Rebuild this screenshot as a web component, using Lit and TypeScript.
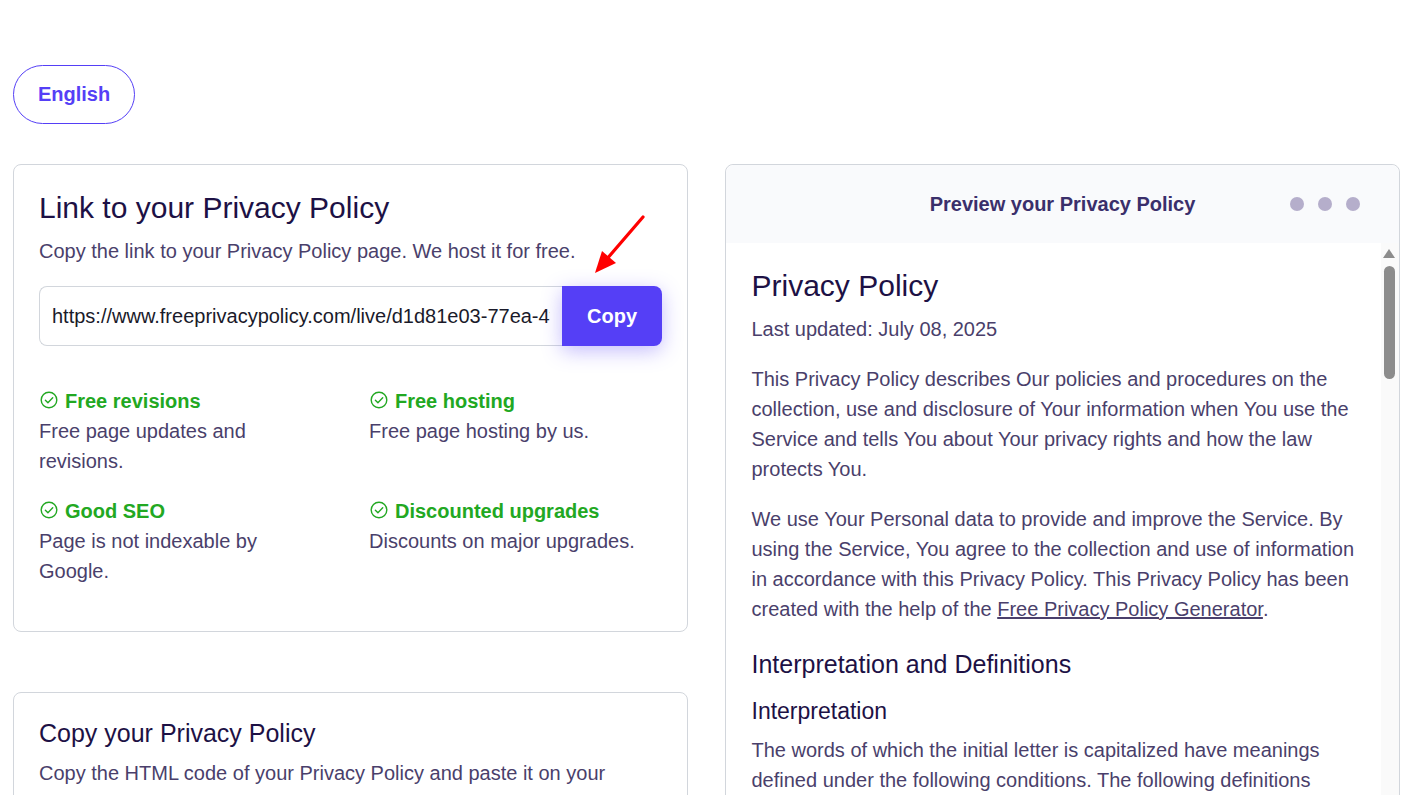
import { LitElement, html, css, svg } from "lit";
import { customElement } from "lit/decorators.js";

const check = html`<svg class="chk" viewBox="0 0 18 18" width="18" height="18" fill="none" stroke="#22a822" stroke-width="1.4" stroke-linecap="round" stroke-linejoin="round">
  <circle cx="9" cy="9" r="7.8"/><path d="M5.4 9.3l2.5 2.5 4.8-5"/></svg>`;

const features = [
  ["Free revisions", "Free page updates and revisions."],
  ["Free hosting", "Free page hosting by us."],
  ["Good SEO", "Page is not indexable by Google."],
  ["Discounted upgrades", "Discounts on major upgrades."],
];

@customElement("app-root")
export class AppRoot extends LitElement {
  static styles = css`
    :host { display: block; height: 795px; overflow: hidden; background: #fff; font-family: "Liberation Sans", Arial, sans-serif; color: #4a3f6b; font-size: 20px; line-height: 30px; }
    .page { padding: 65px 14px 0 13px; }
    .lang { display: inline-flex; align-items: center; justify-content: center; box-sizing: border-box; width: 122px; height: 59px; padding-bottom: 2px; border: 1px solid #553ff6; border-radius: 30px; color: #553ff6; font-weight: 700; margin-bottom: 40px; }
    .cols { display: grid; grid-template-columns: 675px 675px; column-gap: 37px; }
    .left { display: flex; flex-direction: column; gap: 60px; }
    .card { box-sizing: border-box; border: 1px solid #d2d6dc; border-radius: 8px; background: #fff; }
    .link { position: relative; height: 468px; padding: 25px 25px 0; }
    h2 { margin: 0; font-weight: 400; color: #1d1145; }
    .link h2 { font-size: 30px; line-height: 36px; }
    p { margin: 0; }
    .link .lead { margin-top: 10px; }
    .field { display: flex; height: 60px; margin-top: 20px; width: 623px; }
    input { flex: 1; min-width: 0; box-sizing: border-box; border: 1px solid #d2d6dc; border-right: 0; border-radius: 8px 0 0 8px; padding: 0 12px; font: 20px "Liberation Sans", Arial, sans-serif; color: #1a1a2a; background: #fff; outline: none; }
    button { width: 100px; border: 0; background: #553ff6; color: #fff; font: 700 20px "Liberation Sans", Arial, sans-serif; border-radius: 0 8px 8px 0; box-shadow: 0 5px 20px rgba(85,63,246,.35); }
    .arrow { position: absolute; left: 556px; top: 40px; }
    .grid { display: grid; grid-template-columns: 330px 280px; grid-auto-rows: 110px; margin-top: 40px; }
    .grid h3 { margin: 0; display: flex; align-items: center; gap: 7px; font-size: 20px; line-height: 30px; color: #22a822; font-weight: 700; }
    .chk { flex: none; margin-left: 1px; margin-top: -2px; }
    .grid p { width: 250px; }
    .item:nth-child(even) p { width: 280px; }
    .copy { padding: 25px 25px; height: 300px; }
    .copy h2 { font-size: 25px; line-height: 30px; }
    .copy p { margin-top: 10px; }
    .preview { height: 700px; overflow: hidden; }
    .bar { height: 78px; background: #f9fafc; border-radius: 8px 8px 0 0; display: flex; align-items: center; justify-content: center; position: relative; font-weight: 700; color: #3a2f6b; padding-bottom: 1px; box-sizing: border-box; }
    .dots { position: absolute; right: 39px; top: 32px; display: flex; gap: 14px; }
    .dots i { width: 14px; height: 14px; border-radius: 50%; background: #b5aecb; }
    .body { display: flex; height: 620px; }
    .content { width: 655px; box-sizing: border-box; padding: 25px 25px 0 25.5px; flex: none; }
    .content h1 { font-size: 30px; line-height: 36px; font-weight: 400; color: #1d1145; margin: 0 0 10px; }
    .content p { margin-bottom: 20px; }
    .content a { color: inherit; text-decoration: underline; }
    .content h2.a { font-size: 25px; line-height: 30px; margin: 25px 0 17px; }
    .content h2.b { font-size: 23px; line-height: 30px; margin: 0 0 9px; }
    .sb { flex: 1; background: #fafafa; position: relative; }
    .up { position: absolute; left: 2px; top: 6px; width: 0; height: 0; border-left: 6.5px solid transparent; border-right: 6.5px solid transparent; border-bottom: 9px solid #8c8c8c; }
    .thumb { position: absolute; left: 3px; top: 23px; width: 11px; height: 113px; border-radius: 6px; background: #8c8c8c; }
  `;

  render() {
    return html`<div class="page">
      <div class="lang">English</div>
      <div class="cols">
        <div class="left">
          <section class="card link">
            <h2>Link to your Privacy Policy</h2>
            <p class="lead">Copy the link to your Privacy Policy page. We host it for free.</p>
            <div class="field">
              <input readonly value="https://www.freeprivacypolicy.com/live/d1d81e03-77ea-4f6e-9a0b-2c1d" />
              <button>Copy</button>
            </div>
            <svg class="arrow" width="90" height="80" viewBox="0 0 90 80" fill="none">
              ${svg`<path d="M73 12 L36 55" stroke="#f00" stroke-width="3.2" stroke-linecap="round"/><path d="M25 68 L32 46 L46 58 Z" fill="#f00"/>`}
            </svg>
            <div class="grid">
              ${features.map(([t, d]) => html`<div class="item"><h3>${check}${t}</h3><p>${d}</p></div>`)}
            </div>
          </section>
          <section class="card copy">
            <h2>Copy your Privacy Policy</h2>
            <p>Copy the HTML code of your Privacy Policy and paste it on your website.</p>
          </section>
        </div>
        <section class="card preview">
          <div class="bar">Preview your Privacy Policy<div class="dots"><i></i><i></i><i></i></div></div>
          <div class="body">
            <div class="content">
              <h1>Privacy Policy</h1>
              <p>Last updated: July 08, 2025</p>
              <p>This Privacy Policy describes Our policies and procedures on the collection, use and disclosure of Your information when You use the Service and tells You about Your privacy rights and how the law protects You.</p>
              <p>We use Your Personal data to provide and improve the Service. By using the Service, You agree to the collection and use of information in accordance with this Privacy Policy. This Privacy Policy has been created with the help of the <a href="#">Free Privacy Policy Generator</a>.</p>
              <h2 class="a">Interpretation and Definitions</h2>
              <h2 class="b">Interpretation</h2>
              <p>The words of which the initial letter is capitalized have meanings defined under the following conditions. The following definitions shall have the same meaning regardless of whether they appear in singular or in plural.</p>
            </div>
            <div class="sb"><div class="up"></div><div class="thumb"></div></div>
          </div>
        </section>
      </div>
    </div>`;
  }
}
